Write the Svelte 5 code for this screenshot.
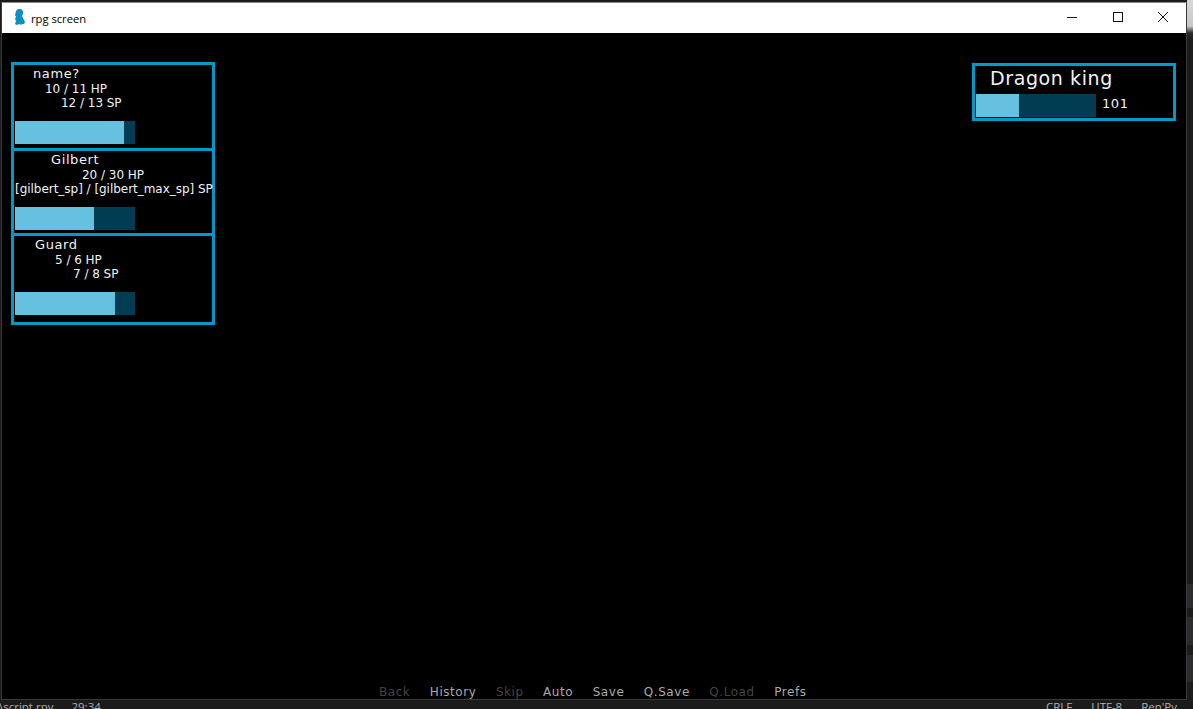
<script lang="ts">
  const party = [
    { name: "name?", nameIndent: 18, hp: "10 / 11 HP", hpIndent: 30, sp: "12 / 13 SP", spIndent: 46, fill: 109, height: 89 },
    { name: "Gilbert", nameIndent: 36, hp: "20 / 30 HP", hpIndent: 67, sp: "[gilbert_sp] / [gilbert_max_sp] SP", spIndent: 0, fill: 79, height: 88 },
    { name: "Guard", nameIndent: 20, hp: "5 / 6 HP", hpIndent: 40, sp: "7 / 8 SP", spIndent: 58, fill: 100, height: 92 },
  ];

  const menu = [
    { label: "Back", off: true },
    { label: "History" },
    { label: "Skip", off: true },
    { label: "Auto" },
    { label: "Save" },
    { label: "Q.Save" },
    { label: "Q.Load", off: true },
    { label: "Prefs" },
  ];
</script>

<div class="desktop">
  <div class="top">
    <div class="window">
      <header class="titlebar">
        <svg class="logo" width="13" height="17" viewBox="0 0 13 17">
          <path fill="#0b8fc4" d="M3 2 L5 0 L8 0 L10 2 L10 5 L9 7 L10 9 L11 11 L12 13 L11 15 L9 15 L8 16 L6 15 L4 16 L2 15 L3 12 L2 10 L3 8 L2 6 Z" />
        </svg>
        <span class="title">rpg screen</span>
        <div class="controls">
          <svg width="10" height="10" viewBox="0 0 10 10"><path d="M0 5.5H10" stroke="#111" fill="none" /></svg>
          <svg width="10" height="10" viewBox="0 0 10 10"><rect x="0.5" y="0.5" width="9" height="9" stroke="#111" fill="none" /></svg>
          <svg width="10" height="10" viewBox="0 0 10 10"><path d="M0 0L10 10M10 0L0 10" stroke="#111" fill="none" /></svg>
        </div>
      </header>

      <main class="game">
        <section class="party">
          {#each party as member}
            <div class="member" style="height: {member.height}px">
              <div class="name" style="padding-left: {member.nameIndent}px">{member.name}</div>
              <div class="stat" style="padding-left: {member.hpIndent}px">{member.hp}</div>
              <div class="stat" style="padding-left: {member.spIndent}px">{member.sp}</div>
              <div class="bar"><div class="fill" style="width: {member.fill}px"></div></div>
            </div>
          {/each}
        </section>

        <section class="enemy">
          <div class="enemy-name">Dragon king</div>
          <div class="enemy-row">
            <div class="bar enemy-bar"><div class="fill" style="width: 43px"></div></div>
            <span class="enemy-hp">101</span>
          </div>
        </section>

        <nav class="menu">
          {#each menu as item}
            <span class:off={item.off}>{item.label}</span>
          {/each}
        </nav>
      </main>
    </div>
    <div class="side"></div>
  </div>

  <footer class="status">
    <div class="status-left">
      <span>\script.rpy</span>
      <span>29:34</span>
    </div>
    <div class="status-right">
      <span>CRLF</span>
      <span>UTF-8</span>
      <span>Ren'Py</span>
    </div>
  </footer>
</div>

<style>
  :global(body) {
    margin: 0;
    background: #1b1b1b;
    overflow: hidden;
  }

  .desktop {
    width: 1193px;
    height: 709px;
    display: flex;
    flex-direction: column;
    overflow: hidden;
    background: #1b1b1b;
    font-family: "DejaVu Sans", sans-serif;
  }

  .top {
    display: flex;
    flex-shrink: 0;
    height: 700px;
  }

  .window {
    width: 1186px;
    height: 698px;
    margin: 2px 0 0 1px;
    flex-shrink: 0;
    display: flex;
    flex-direction: column;
    border: 1px solid #3a3a3a;
    border-top-color: #8a8a8a;
    box-sizing: border-box;
  }

  .side {
    flex: 1;
    background: linear-gradient(
      to bottom,
      #d8d8d8 0,
      #c8c8c8 26px,
      #2a2a2a 33px,
      #1c1c1c 40px,
      #1c1c1c 584px,
      #2c2c2e 584px,
      #2c2c2e 608px,
      #1c1c1c 608px,
      #1c1c1c 617px,
      #2c2c2e 617px,
      #2c2c2e 645px,
      #1c1c1c 645px,
      #1c1c1c 655px,
      #2c2c2e 655px,
      #2c2c2e 682px,
      #1c1c1c 682px
    );
  }

  .titlebar {
    height: 30px;
    flex-shrink: 0;
    background: #fff;
    display: flex;
    align-items: center;
    padding-left: 11px;
  }

  .logo {
    margin-top: -1px;
  }

  .title {
    margin-left: 5px;
    font: 11.2px "Open Sans", "Noto Sans", sans-serif;
    color: #000;
  }

  .controls {
    margin-left: auto;
    display: flex;
    gap: 35.5px;
    padding-right: 18px;
    margin-top: -2px;
  }

  .game {
    flex: 1;
    background: #000;
    position: relative;
    color: #fff;
    padding: 29px 10px 0 9px;
    display: flex;
    justify-content: space-between;
    align-items: flex-start;
  }

  .party {
    width: 204px;
    display: flex;
    flex-direction: column;
  }

  .member {
    width: 204px;
    box-sizing: border-box;
    border: 3px solid #0099cc;
    padding: 1px 0 0 1px;
    white-space: nowrap;
  }

  .member + .member {
    margin-top: -3px;
  }

  .name {
    font-size: 13px;
    line-height: 16px;
    letter-spacing: 0.6px;
    color: #f2f2f2;
  }

  .stat {
    font-size: 12px;
    line-height: 14px;
    letter-spacing: -0.03px;
    color: #f2f2f2;
  }

  .bar {
    width: 120px;
    height: 23px;
    margin-top: 11px;
    background: #003d52;
  }

  .fill {
    height: 100%;
    background: #66c1e0;
  }

  .enemy {
    width: 204px;
    height: 58px;
    margin-top: 1px;
    box-sizing: border-box;
    border: 3px solid #0099cc;
  }

  .enemy-name {
    font-size: 19px;
    line-height: 24px;
    padding-left: 15px;
    letter-spacing: 0.6px;
    color: #f2f2f2;
  }

  .enemy-row {
    display: flex;
    align-items: flex-start;
    gap: 6px;
    padding: 4px 0 0 1px;
  }

  .enemy-bar {
    margin-top: 0;
  }

  .enemy-hp {
    font-size: 13px;
    line-height: 16px;
    margin-top: 2px;
    color: #f2f2f2;
    letter-spacing: 0.6px;
  }

  .menu {
    position: absolute;
    left: 377px;
    bottom: 0;
    height: 14px;
    display: flex;
    gap: 19.5px;
    font-size: 12px;
    letter-spacing: 0.55px;
    color: #aaa;
  }

  .menu .off {
    color: #444;
  }

  .status {
    flex: 1;
    display: flex;
    justify-content: space-between;
    font: 11.5px "Open Sans", sans-serif;
    color: #b0b0b0;
    line-height: 14px;
    white-space: nowrap;
  }

  .status-left {
    display: flex;
    gap: 18px;
    margin-left: -1px;
  }

  .status-right {
    display: flex;
    gap: 19px;
    padding-right: 16px;
  }
</style>
